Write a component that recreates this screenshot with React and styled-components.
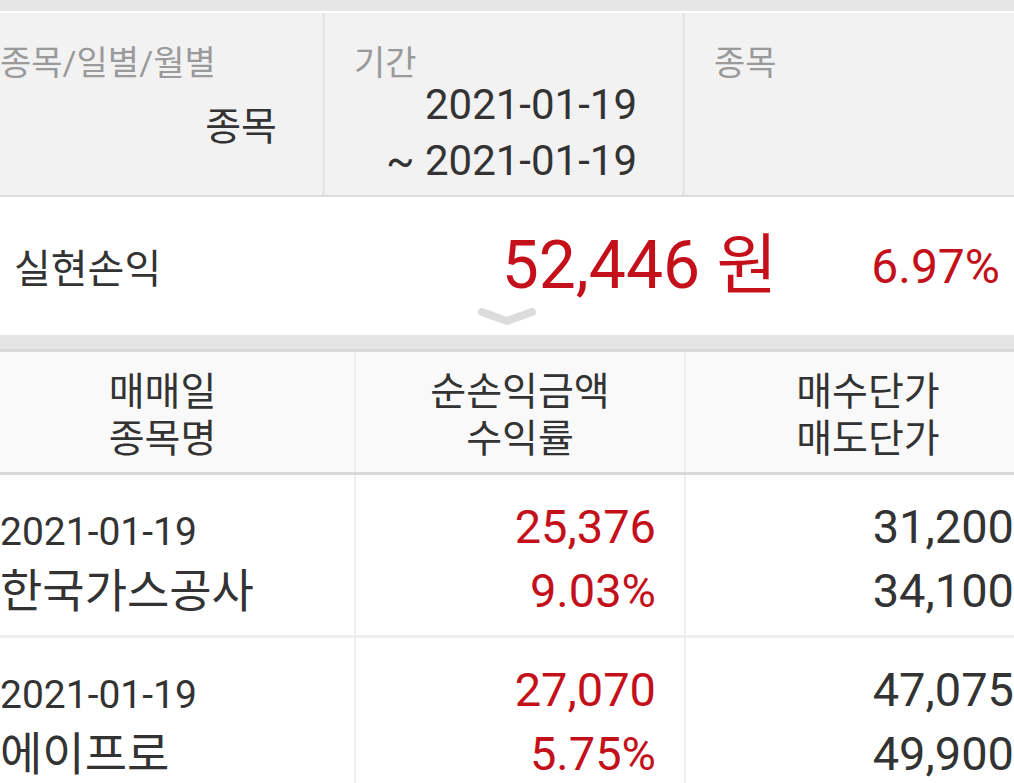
import styled, { createGlobalStyle } from "styled-components";

const FONT = `"Roboto", "Noto Sans CJK KR", sans-serif`;
const RED = "#c4101a";
const TEXT = "#333333";

const GlobalStyle = createGlobalStyle`
  html, body {
    margin: 0;
    padding: 0;
    background: #ffffff;
    overflow: hidden;
  }
  body {
    font-family: ${FONT};
    color: ${TEXT};
  }
`;

const rows = [
  {
    date: "2021-01-19",
    name: "한국가스공사",
    profit: "25,376",
    rate: "9.03%",
    buy: "31,200",
    sell: "34,100",
  },
  {
    date: "2021-01-19",
    name: "에이프로",
    profit: "27,070",
    rate: "5.75%",
    buy: "47,075",
    sell: "49,900",
  },
];

export default function App() {
  return (
    <>
      <GlobalStyle />
      <Page>
        <TopBand />
        <FilterPanel>
          <FilterCell $width={354}>
            <FilterLabel>종목/일별/월별</FilterLabel>
            <FilterValue $offset={18}>종목</FilterValue>
          </FilterCell>
          <FilterCell $width={360}>
            <FilterLabel>기간</FilterLabel>
            <DateRange>
              2021-01-19
              <br />~ 2021-01-19
            </DateRange>
          </FilterCell>
          <FilterCell $width={365} $last>
            <FilterLabel>종목</FilterLabel>
          </FilterCell>
        </FilterPanel>

        <Summary>
          <SummaryLabel>실현손익</SummaryLabel>
          <Amount>
            52,446 <span>원</span>
          </Amount>
          <Percent>6.97%</Percent>
          <Chevron viewBox="0 0 60 20">
            <path
              d="M5 5 L30 14 L55 5"
              fill="none"
              stroke="#dcdcdc"
              strokeWidth="8"
              strokeLinecap="round"
              strokeLinejoin="round"
            />
          </Chevron>
        </Summary>

        <GrayBand />

        <Table>
          <HeadRow>
            <HeadCell $width={385}>
              매매일
              <br />
              종목명
            </HeadCell>
            <HeadCell $width={330}>
              순손익금액
              <br />
              수익률
            </HeadCell>
            <HeadCell $width={364} $last>
              매수단가
              <br />
              매도단가
            </HeadCell>
          </HeadRow>
          {rows.map((r, i) => (
            <BodyRow key={i}>
              <BodyCell $width={385} $align="left">
                <DateText>{r.date}</DateText>
                <NameText>{r.name}</NameText>
              </BodyCell>
              <BodyCell $width={330} $align="right" $pad={28}>
                <NumText $red>{r.profit}</NumText>
                <NumText $red>{r.rate}</NumText>
              </BodyCell>
              <BodyCell $width={364} $align="right" $pad={36} $last>
                <NumText>{r.buy}</NumText>
                <NumText>{r.sell}</NumText>
              </BodyCell>
            </BodyRow>
          ))}
        </Table>
      </Page>
    </>
  );
}

const Page = styled.div`
  width: 1079px;
  margin-left: -29px;
  display: flex;
  flex-direction: column;
`;

const TopBand = styled.div`
  height: 11px;
  background: #e6e6e6;
  border-bottom: 2px solid #ffffff;
`;

const FilterPanel = styled.div`
  display: flex;
  height: 182px;
  background: #f2f2f2;
  border-bottom: 2px solid #dcdcdc;
`;

const FilterCell = styled.div`
  width: ${(p) => p.$width}px;
  box-sizing: border-box;
  padding: 32px 45px 0 29px;
  display: flex;
  flex-direction: column;
  border-right: ${(p) => (p.$last ? "none" : "3px solid #e6e6e6")};
`;

const FilterLabel = styled.div`
  font-size: 34px;
  line-height: 36px;
  color: #9a9a9a;
`;

const FilterValue = styled.div`
  margin-top: ${(p) => p.$offset}px;
  font-size: 39px;
  line-height: 56px;
  text-align: right;
  color: ${TEXT};
`;

const DateRange = styled.div`
  margin-top: -4px;
  font-size: 42px;
  line-height: 56px;
  text-align: right;
  color: ${TEXT};
`;

const Summary = styled.div`
  position: relative;
  height: 138px;
  display: flex;
  align-items: center;
  padding: 0 50px 0 43px;
  background: #ffffff;
`;

const SummaryLabel = styled.div`
  flex: 1;
  font-size: 40px;
  color: ${TEXT};
`;

const Amount = styled.div`
  font-size: 66px;
  color: ${RED};
  line-height: 1;
  margin-right: 94px;
`;

const Percent = styled.div`
  font-size: 48px;
  color: ${RED};
`;

const Chevron = styled.svg`
  position: absolute;
  left: 505px;
  bottom: 8px;
  width: 62px;
  height: 20px;
  filter: blur(0.6px);
`;

const GrayBand = styled.div`
  height: 14px;
  background: #e4e4e4;
  border-bottom: 3px solid #d8d8d8;
`;

const Table = styled.div`
  display: flex;
  flex-direction: column;
`;

const HeadRow = styled.div`
  display: flex;
  height: 120px;
  background: #f9f9f9;
  border-bottom: 3px solid #d9d9d9;
`;

const HeadCell = styled.div`
  width: ${(p) => p.$width}px;
  box-sizing: border-box;
  display: flex;
  align-items: center;
  justify-content: center;
  padding-top: 7px;
  text-align: center;
  font-size: 39px;
  line-height: 47px;
  color: ${TEXT};
  border-right: ${(p) => (p.$last ? "none" : "2px solid #eeeeee")};
`;

const BodyRow = styled.div`
  display: flex;
  height: 160px;
  border-bottom: 3px solid #eeeeee;
`;

const BodyCell = styled.div`
  width: ${(p) => p.$width}px;
  box-sizing: border-box;
  display: flex;
  flex-direction: column;
  align-items: ${(p) => (p.$align === "left" ? "flex-start" : "flex-end")};
  padding: ${(p) =>
    p.$align === "left" ? "27px 0 0 29px" : `20px ${p.$pad}px 0 0`};
  border-right: ${(p) => (p.$last ? "none" : "2px solid #eeeeee")};
`;

const DateText = styled.div`
  font-size: 39px;
  line-height: 60px;
  color: ${TEXT};
`;

const NameText = styled.div`
  font-size: 46px;
  line-height: 58px;
  color: ${TEXT};
`;

const NumText = styled.div`
  font-size: 47px;
  line-height: 64px;
  color: ${(p) => (p.$red ? RED : TEXT)};
`;
